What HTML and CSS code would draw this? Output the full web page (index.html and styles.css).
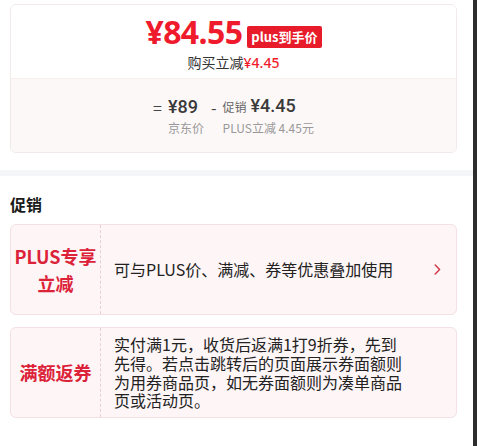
FILE: index.html
```html
<!DOCTYPE html>
<html lang="zh-CN">
<head>
<meta charset="utf-8">
<title>促销</title>
<link rel="stylesheet" href="styles.css">
</head>
<body>
<div class="page">
  <main class="content">
    <section class="wrap">
      <div class="price-card">
        <div class="price-top">
          <div class="price-main">
            <span class="price-big">¥84.55</span>
            <span class="badge">plus到手价</span>
          </div>
          <div class="price-sub">购买立减<span class="red">¥4.45</span></div>
        </div>
        <div class="price-bottom">
          <div class="calc">
            <span class="op">=</span>
            <span class="amt">¥89</span>
            <span class="op minus">-</span>
            <span class="amt"><span class="amt-label">促销</span>¥4.45</span>
            <span></span>
            <span class="lbl">京东价</span>
            <span></span>
            <span class="lbl">PLUS立减 4.45元</span>
          </div>
        </div>
      </div>
    </section>
    <div class="band"></div>
    <section class="wrap promo">
      <h2 class="promo-title">促销</h2>
      <div class="promo-item">
        <div class="tag">PLUS专享<br>立减</div>
        <div class="desc">
          <span class="desc-text">可与PLUS价、满减、券等优惠叠加使用</span>
          <svg class="chev" width="7" height="11" viewBox="0 0 7 11" aria-hidden="true"><polyline points="1.2,1 5.6,5.5 1.2,10" fill="none" stroke="#d6394a" stroke-width="1.5" stroke-linecap="round" stroke-linejoin="round"/></svg>
        </div>
      </div>
      <div class="promo-item">
        <div class="tag">满额返券</div>
        <div class="desc desc-long">
          <span class="desc-text">实付满1元，收货后返满1打9折券，先到先得。若点击跳转后的页面展示券面额则为用券商品页，如无券面额则为凑单商品页或活动页。</span>
        </div>
      </div>
    </section>
  </main>
  <div class="scrollbar"></div>
</div>
</body>
</html>
```

FILE: styles.css
```css
* { box-sizing: border-box; }
html, body { margin: 0; padding: 0; background: #fff; }
body {
  font-family: "Noto Sans CJK SC", "Noto Sans", sans-serif;
  color: #333;
  width: 477px;
  height: 446px;
  overflow: hidden;
}
.page {
  display: flex;
  height: 446px;
}
.content {
  flex: 1;
  padding-top: 4px;
}
.scrollbar {
  width: 4px;
  background: #2d2d2d;
}
.wrap {
  padding: 0 16px 0 10px;
}

/* price card */
.price-card {
  border: 1px solid #f1e9ea;
  border-radius: 6px;
  overflow: hidden;
}
.price-top {
  background: #fff;
  padding: 10px 0 5px;
  display: flex;
  flex-direction: column;
  align-items: center;
}
.price-main {
  display: flex;
  align-items: flex-end;
  height: 34px;
}
.price-big {
  font-family: "Noto Sans", sans-serif;
  font-weight: 700;
  font-size: 32px;
  line-height: 34px;
  color: #ef1a2c;
  letter-spacing: -0.6px;
}
.badge {
  margin-left: 5px;
  margin-bottom: 1px;
  background: #e81b2b;
  color: #fff;
  font-weight: 700;
  font-size: 13px;
  line-height: 22px;
  height: 22px;
  padding: 0 4px;
  border-radius: 2px;
}
.price-sub {
  margin-top: 3px;
  font-size: 14px;
  line-height: 20px;
  color: #333;
}
.red {
  color: #ef1a2c;
  font-family: "Noto Sans", sans-serif;
  font-weight: 500;
}
.price-bottom {
  background: #fdf8f8;
  border-top: 1px solid #f8eeee;
  padding: 15px 0 15px;
  display: flex;
  justify-content: center;
}
.calc {
  display: grid;
  grid-template-columns: auto auto auto auto;
  column-gap: 6px;
  align-items: center;
}
.op {
  font-size: 16px;
  line-height: 24px;
  color: #444;
}
.minus { margin-left: 1px; }
.amt {
  font-family: "Roboto", "Noto Sans CJK SC", sans-serif;
  font-weight: 500;
  font-size: 18px;
  line-height: 24px;
  color: #3a3a3a;
  white-space: nowrap;
}
.amt-label {
  font-family: "Noto Sans CJK SC", sans-serif;
  font-weight: 400;
  font-size: 12px;
  color: #666;
  margin-right: 4px;
}
.lbl {
  font-size: 12px;
  line-height: 18px;
  color: #999;
  white-space: nowrap;
}

/* band */
.band {
  height: 6px;
  background: #f4f6f9;
  margin-top: 17px;
}

/* promo */
.promo-title {
  margin: 0;
  padding-top: 17px;
  font-size: 16px;
  line-height: 22px;
  font-weight: 700;
  color: #1a1a1a;
}
.promo-item {
  margin-top: 9px;
  display: flex;
  min-height: 91px;
  background: #fdf5f6;
  border: 1px solid #f5e0e4;
  border-radius: 6px;
}
.promo-item + .promo-item { margin-top: 12px; }
.tag {
  width: 89px;
  flex: none;
  display: flex;
  align-items: center;
  justify-content: center;
  text-align: center;
  font-size: 18px;
  line-height: 27px;
  font-weight: 700;
  color: #dc2239;
}
.desc {
  flex: 1;
  display: flex;
  align-items: center;
  border-left: 1px dashed #e9cfd4;
  padding: 7px 15px 7px 13px;
  font-size: 16px;
  line-height: 18.7px;
  color: #222;
}
.desc-text { flex: 1; }
.desc-long { padding-right: 50px; }
.chev { flex: none; }
```
